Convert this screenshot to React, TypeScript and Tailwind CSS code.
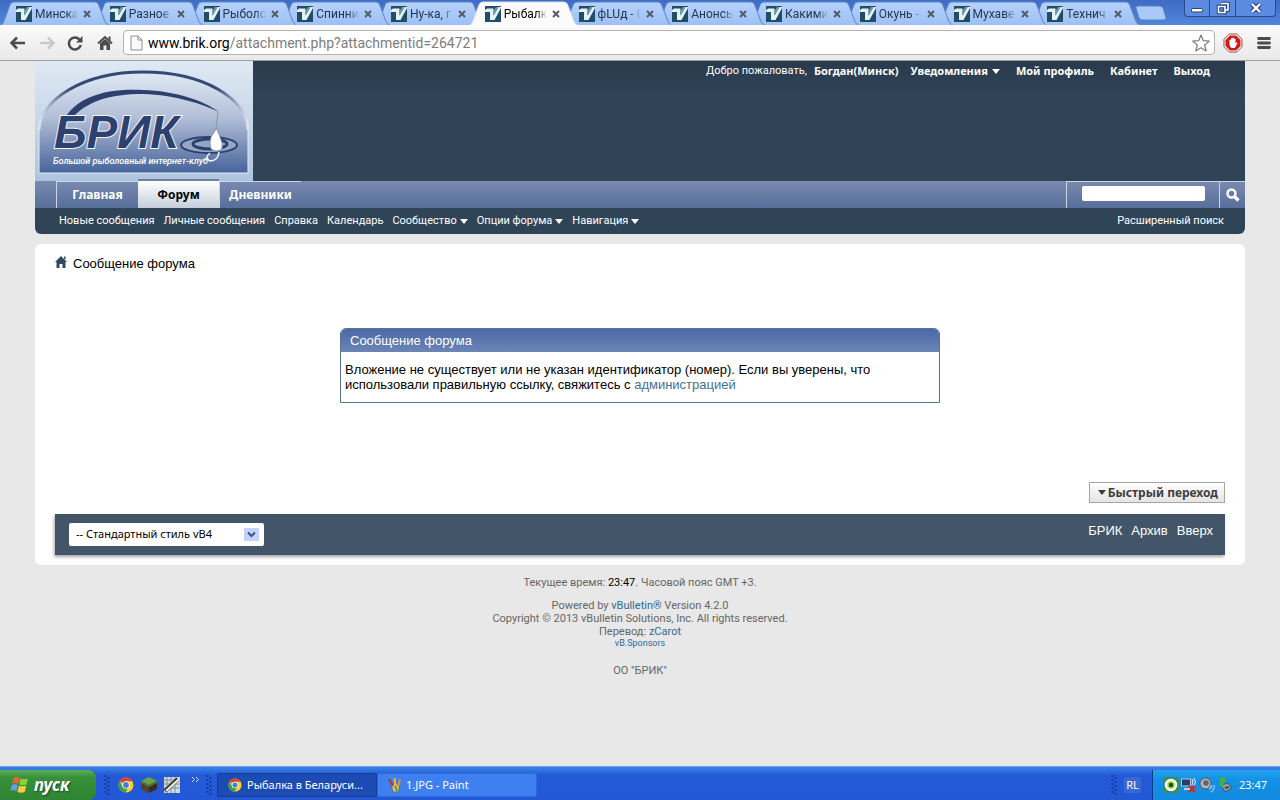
import React from 'react';

const tabs = [
  'Минска', 'Разное', 'Рыболо', 'Спинни', 'Ну-ка, г', 'Рыбалк', 'фLUд - С', 'Анонсы', 'Какими', 'Окунь -', 'Мухаве', 'Технич',
];

function VbIcon() {
  return (
    <svg viewBox="0 0 16 16" className="h-4 w-4 shrink-0" aria-hidden="true">
      <rect width="16" height="16" fill="#1f4e66" />
      <path d="M0 4 L2 2.500 H8.500 V9.500 L13.500 1 H16 V2 L9.500 14 H5 V6 H0 Z" fill="#e6f1f6" />
      <path d="M8.500 9.500 L13.500 1 H11 L8.500 5 Z" fill="#6d9bb0" />
    </svg>
  );
}

function ChromeIcon({ size }: { size: string }) {
  return (
    <svg viewBox="0 0 16 16" className={size} aria-hidden="true">
      <circle cx="8" cy="8" r="7.500" fill="#f7cf2e" />
      <path d="M8 8 L1.500 4.200 A7.500 7.500 0 0 1 14.500 4.300 L8 4.300 Z" fill="#dc4332" />
      <path d="M1.500 4.200 A7.500 7.500 0 0 0 7.200 15.450 L10.500 10.500 L8 8 L4.800 9.500 Z" fill="#3d9e48" />
      <circle cx="8" cy="8" r="3.800" fill="#fff" />
      <circle cx="8" cy="8" r="2.900" fill="#3f7fd4" />
    </svg>
  );
}

function Tab({ label, active, z }: { label: string; active: boolean; z: number }) {
  return (
    <div className="relative h-6 min-w-0 flex-1" style={{ zIndex: z }}>
      <svg viewBox="0 0 108 24" preserveAspectRatio="none" className="absolute inset-y-0 -left-[7px] h-full w-[calc(100%+14px)]" aria-hidden="true">
        <defs>
          <linearGradient id="tabFill" x1="0" y1="0" x2="0" y2="1">
            <stop offset="0" stopColor="#b5d2fb" />
            <stop offset="1" stopColor="#9dc0f5" />
          </linearGradient>
        </defs>
        <path
          d="M0 24 Q2 23 3 20 L9 4 Q10 1 13 1 H94 Q97 1 98 4 L104 20 Q105 23 108 24"
          fill={active ? '#fbfbfb' : 'url(#tabFill)'}
          stroke={active ? '#d6e2f4' : '#5f86bf'}
          strokeWidth="1"
        />
      </svg>
      <div className="relative flex h-full items-center pl-2 pt-[2px]">
        <VbIcon />
        <a href="#tab" className={`ml-[3px] w-[43px] shrink-0 overflow-hidden whitespace-nowrap text-xs [mask-image:linear-gradient(to_right,black_75%,transparent)] ${active ? 'text-black' : 'text-[#26364f]'}`}>
          {label}
        </a>
        <button aria-label="Закрыть вкладку" className="ml-[3px] h-3 w-3 shrink-0">
          <svg viewBox="0 0 12 12" className="h-3 w-3">
            <path d="M3 3 L9 9 M9 3 L3 9" stroke="#505a68" strokeWidth="1.900" />
          </svg>
        </button>
      </div>
    </div>
  );
}

function BrowserChrome() {
  return (
    <header className="border-b border-[#a0a0a0] bg-[#f0f0f0]">
      <div className="flex h-[25px] items-start bg-linear-to-b from-[#3e6bc4] to-[#5285dc] pl-2">
        <nav className="flex min-w-0 flex-1 self-end" aria-label="Вкладки">
          {tabs.map((t, i) => (
            <Tab key={t} label={t} active={i === 5} z={i === 5 ? 30 : 20 - i} />
          ))}
        </nav>
        <button aria-label="Новая вкладка" className="ml-[2px] mt-[5px] h-4 w-8">
          <svg viewBox="0 0 32 16" className="h-4 w-8">
            <path d="M1 3 Q0 1 3 1 H24 Q27 1 28 3 L31 13 Q31 15 29 15 H8 Q5 15 4 13 Z" fill="#a9c9f7" stroke="#5b83c6" />
          </svg>
        </button>
        <div className="ml-[17px] mr-1 flex h-[17px] w-[92px] overflow-hidden rounded-b-sm border border-t-0 border-[#2b4a8c] bg-[#5b8be0]">
          <button aria-label="Свернуть" className="flex w-[25px] justify-center border-r border-[#2b4a8c]">
            <svg viewBox="0 0 16 16" className="h-4 w-4"><rect x="2.500" y="8.500" width="11" height="3.500" rx="1" fill="#fff" stroke="#26406f" /></svg>
          </button>
          <button aria-label="Восстановить" className="flex w-[26px] justify-center border-r border-[#2b4a8c]">
            <svg viewBox="0 0 16 16" className="h-4 w-4">
              <path d="M6 3.500 H13 V10 H10.500 M3.500 6.500 H10 V12.500 H3.500 Z" fill="none" stroke="#26406f" strokeWidth="3.500" />
              <path d="M6 3.500 H13 V10 H10.500 M3.500 6.500 H10 V12.500 H3.500 Z" fill="none" stroke="#fff" strokeWidth="1.600" />
            </svg>
          </button>
          <button aria-label="Закрыть" className="flex flex-1 justify-center">
            <svg viewBox="0 0 16 16" className="h-4 w-4">
              <path d="M4 4 L12 12 M12 4 L4 12" stroke="#26406f" strokeWidth="4.500" />
              <path d="M4 4 L12 12 M12 4 L4 12" stroke="#fff" strokeWidth="2.400" />
            </svg>
          </button>
        </div>
      </div>
      <div className="flex h-[35px] items-center bg-linear-to-b from-[#fbfbfb] to-[#e9e9e9] pl-[9px] pr-2">
        <button aria-label="Назад" className="h-4 w-[18px]">
          <svg viewBox="0 0 18 16" className="h-4 w-[18px]"><path d="M8 2.500 L2.500 8 L8 13.500 M3 8 H16" fill="none" stroke="#4b4b4b" strokeWidth="2.500" /></svg>
        </button>
        <button aria-label="Вперёд" className="ml-[11px] h-4 w-[18px]">
          <svg viewBox="0 0 18 16" className="h-4 w-[18px]"><path d="M10 2.500 L15.500 8 L10 13.500 M15 8 H2" fill="none" stroke="#c9c9c9" strokeWidth="2.500" /></svg>
        </button>
        <button aria-label="Обновить" className="ml-[11px] h-4 w-4">
          <svg viewBox="0 0 16 16" className="h-4 w-4"><path d="M12.500 4.500 A6 6 0 1 0 13.800 10" fill="none" stroke="#4b4b4b" strokeWidth="2.500" /><path d="M15.500 1 V7.500 H9 Z" fill="#4b4b4b" /></svg>
        </button>
        <button aria-label="Домой" className="ml-[14px] h-4 w-4">
          <svg viewBox="0 0 16 16" className="h-4 w-4"><path d="M1 8.500 L8 2 L15 8.500" fill="none" stroke="#4b4b4b" strokeWidth="2" /><path d="M3 8.500 L8 4 L13 8.500 V15 H9.500 V10.500 H6.500 V15 H3 Z M11.500 1.500 H13.500 V6 L11.500 4 Z" fill="#4b4b4b" /></svg>
        </button>
        <div className="ml-[10px] flex h-[25px] flex-1 items-center rounded-sm border border-[#b4b4b4] bg-white pl-[6px] pr-1">
          <svg viewBox="0 0 13 16" className="h-4 w-[13px]" aria-hidden="true"><path d="M1 1 H8 L12 5 V15 H1 Z M8 1 V5 H12" fill="#fafafa" stroke="#8d8d8d" /></svg>
          <a href="#address" className="ml-[5px] flex-1 whitespace-nowrap text-sm text-[#7d7d7d]"><span className="text-black">www.brik.org</span>/attachment.php?attachmentid=264721</a>
          <button aria-label="В закладки" className="h-[18px] w-[18px]">
            <svg viewBox="0 0 18 18" className="h-[18px] w-[18px]"><path d="M9 1 L11.300 6.700 L17.300 7.100 L12.700 11 L14.200 17 L9 13.700 L3.800 17 L5.300 11 L0.700 7.100 L6.700 6.700 Z" fill="#fff" stroke="#7c7c7c" strokeWidth="1.200" strokeLinejoin="round" /></svg>
          </button>
        </div>
        <button aria-label="AdBlock" className="ml-2 h-5 w-5">
          <svg viewBox="0 0 20 20" className="h-5 w-5">
            <path d="M6.300 1 H13.700 L19 6.300 V13.700 L13.700 19 H6.300 L1 13.700 V6.300 Z" fill="#fff" stroke="#8f4a45" />
            <path d="M6.900 2.500 H13.100 L17.500 6.900 V13.100 L13.100 17.500 H6.900 L2.500 13.100 V6.900 Z" fill="#cf1a17" />
            <path d="M6.500 10 V7 Q7.200 6.200 8 7 V5.500 Q8.800 4.600 9.500 5.500 V5 Q10.200 4.200 11 5 V6 Q11.800 5.200 12.500 6 V10.500 L13.500 9.500 Q14.600 9.500 14.300 10.500 L11.800 15 H8.500 Q6.500 14 6.500 10 Z" fill="#fff" />
          </svg>
        </button>
        <button aria-label="Меню" className="ml-[13px] h-4 w-4">
          <svg viewBox="0 0 16 16" className="h-4 w-4"><path d="M2.500 3.500 H13.500 M2.500 8 H13.500 M2.500 12.500 H13.500" stroke="#4b4b4b" strokeWidth="2.800" strokeLinecap="round" /></svg>
        </button>
      </div>
    </header>
  );
}

function Logo() {
  return (
    <svg viewBox="0 0 218 120" className="h-[120px] w-[218px] shrink-0" role="img" aria-label="БРИК">
      <defs>
        <linearGradient id="logoBg" x1="0" y1="0" x2="0" y2="1"><stop offset="0" stopColor="#dfe9f4" /><stop offset="1" stopColor="#aec3de" /></linearGradient>
        <linearGradient id="logoArch" x1="0" y1="0" x2="0" y2="1"><stop offset="0" stopColor="#e0eaf5" /><stop offset="0.450" stopColor="#b3bfd8" /><stop offset="1" stopColor="#46639a" /></linearGradient>
        <linearGradient id="archLine" x1="0" y1="0" x2="1" y2="0"><stop offset="0" stopColor="#dce4ef" /><stop offset="0.150" stopColor="#344a75" /><stop offset="0.850" stopColor="#344a75" /><stop offset="1" stopColor="#dce4ef" /></linearGradient>
      </defs>
      <rect width="218" height="120" fill="url(#logoBg)" />
      <path d="M4 112 V69 C5 39 48 11 108 11 C168 11 213 37 213 69 V112 Z" fill="url(#logoArch)" stroke="#e4ecf5" />
      <path d="M4 69 C5 39 48 11 108 11 C168 11 212 37 213 69" fill="none" stroke="url(#archLine)" strokeWidth="3" />
      <path d="M28 60 C41 36 70 27 108 29 C140 30 168 39 184 51 C168 43 140 34 108 33 C75 33 50 40 35 60 Z" fill="#2d416f" />
      <path d="M183 51 L181 68" stroke="#8996ad" />
      <ellipse cx="174" cy="84" rx="28" ry="8" fill="#96a7c6" stroke="#2d416f" strokeWidth="2" />
      <ellipse cx="175" cy="83" rx="17" ry="5" fill="none" stroke="#2d416f" strokeWidth="3" />
      <text x="19" y="87" fontFamily="Liberation Sans, sans-serif" fontStyle="italic" fontWeight="700" fontSize="46" fill="#2d416f" stroke="#f4f7fb" strokeWidth="2" paintOrder="stroke">БРИК</text>
      <text x="18" y="103" fontFamily="Roboto, sans-serif" fontStyle="italic" fontWeight="500" fontSize="9" fill="#fff">Большой рыболовный интернет-клуб</text>
      <path d="M181 68 L176 76 Q174 82 176 88 Q181 92 187 88 Q188 82 185 76 L182 68 Z" fill="#fff" stroke="#63769a" strokeWidth="0.700" />
      <path d="M175 92 Q169 97 175 100 Q183 100 184 91" fill="none" stroke="#f4f7fb" strokeWidth="1.500" />
    </svg>
  );
}

function Arrow({ tone }: { tone: string }) {
  return <svg viewBox="0 0 8 5" className={`h-[5px] w-2 shrink-0 ${tone}`} aria-hidden="true"><path d="M0 0 H8 L4 5 Z" fill="currentColor" /></svg>;
}

function ForumHeader() {
  return (
    <div className="overflow-hidden rounded-b-md bg-[#304458] text-white">
      <div className="flex h-[120px] items-start justify-between bg-linear-to-b from-[#2a3a4c] to-[#304458] to-30%">
        <Logo />
        <nav className="flex pr-[35px] pt-1 font-['Noto_Sans',sans-serif] text-[11px] leading-3 font-bold" aria-label="Пользователь">
          <span className="font-['Roboto',sans-serif] font-normal">Добро пожаловать,</span>
          <a href="#user" className="ml-[7px]">Богдан(Минск)</a>
          <a href="#notices" className="ml-3 flex items-center gap-1">Уведомления <Arrow tone="text-white" /></a>
          <a href="#profile" className="ml-4">Мой профиль</a>
          <a href="#cabinet" className="ml-4">Кабинет</a>
          <a href="#logout" className="ml-4">Выход</a>
        </nav>
      </div>
      <div className="flex h-[27px] items-stretch bg-linear-to-b from-[#7a8aaf] to-[#566f9a]">
        <nav className="ml-[21px] flex font-['Noto_Sans',sans-serif] text-xs font-bold" aria-label="Разделы">
          <a href="#home" className="flex w-[82px] items-center justify-center border-l border-t border-[#c7d6ea]">Главная</a>
          <a href="#forum" className="-mt-[2px] flex w-[81px] items-center justify-center border-t-2 border-[#6d8299] bg-linear-to-b from-white to-[#c4cfdb] text-black">Форум</a>
          <a href="#blogs" className="flex w-[82px] items-center justify-center border-l border-t border-[#c7d6ea]">Дневники</a>
        </nav>
        <form className="ml-auto flex" onSubmit={(e) => e.preventDefault()}>
          <div className="flex w-[153px] items-start justify-center border-l border-t border-[#c7d6ea] pt-1">
            <input aria-label="Поиск" className="h-[15px] w-[123px] rounded-xs bg-white text-[11px] text-black" />
          </div>
          <button aria-label="Искать" className="flex w-[26px] items-center justify-center border-l border-t border-[#c7d6ea]">
            <svg viewBox="0 0 14 14" className="h-[14px] w-[14px]"><circle cx="5.500" cy="5.500" r="4" fill="none" stroke="#fff" strokeWidth="2.400" /><path d="M8.500 8.500 L12.500 12.500" stroke="#fff" strokeWidth="3.200" /></svg>
          </button>
        </form>
      </div>
      <div className="flex h-[26px] items-center justify-between pl-6 pr-[21px] text-[11px] whitespace-nowrap">
        <nav className="flex gap-[9px]" aria-label="Меню форума">
          <a href="#new">Новые сообщения</a>
          <a href="#pm">Личные сообщения</a>
          <a href="#faq">Справка</a>
          <a href="#calendar">Календарь</a>
          <a href="#community" className="flex items-center gap-[3px]">Сообщество <Arrow tone="text-white" /></a>
          <a href="#options" className="flex items-center gap-[3px]">Опции форума <Arrow tone="text-white" /></a>
          <a href="#navigation" className="flex items-center gap-[3px]">Навигация <Arrow tone="text-white" /></a>
        </nav>
        <a href="#search">Расширенный поиск</a>
      </div>
    </div>
  );
}

function ForumBody() {
  return (
    <main className="mt-[10px] rounded-md bg-white px-5 pb-[10px] pt-3 font-['Liberation_Sans',sans-serif]">
      <div className="flex items-center gap-[6px] text-[13px] leading-4 text-black">
        <svg viewBox="0 0 12 12" className="mb-1 h-3 w-3" aria-hidden="true"><path d="M6 0 L12 6 H10.500 V12 H7.500 V8 H4.500 V12 H1.500 V6 H0 Z M9 0.500 H10.500 V4 L9 2.500 Z" fill="#2f4a60" /></svg>
        <span>Сообщение форума</span>
      </div>
      <section className="mx-auto mt-14 max-w-[600px] overflow-hidden rounded-t-md border border-[#5a7493]">
        <h2 className="bg-linear-to-b from-[#4a69a8] to-[#6c85b5] px-[9px] py-1 text-[13px] leading-[15px] text-white">Сообщение форума</h2>
        <p className="px-1 pb-[10px] pt-[10px] text-[13px] leading-[15px] text-black">
          Вложение не существует или не указан идентификатор (номер). Если вы уверены, что использовали правильную ссылку, свяжитесь с <a href="#admin" className="text-[#417394]">администрацией</a>
        </p>
      </section>
      <div className="mt-[79px] flex justify-end">
        <button className="flex h-[21px] w-[136px] items-center justify-end gap-[2px] border border-[#a5a5a5] bg-linear-to-b from-white to-[#e4e4e4] pr-[6px] font-['Noto_Sans',sans-serif] text-xs font-bold whitespace-nowrap text-[#3e3e3e]">
          <Arrow tone="text-[#3e3e3e]" />Быстрый переход
        </button>
      </div>
      <footer className="mt-[11px] flex h-[41px] items-start justify-between bg-[#435669] px-3 shadow-[-1px_2px_3px_rgba(0,0,0,0.35)]">
        <div className="relative ml-[2px] mt-[9px] font-['Noto_Sans',sans-serif] text-[11px]">
          <select aria-label="Стиль" className="h-[23px] w-[195px] appearance-none rounded-xs bg-white px-[7px] text-black">
            <option>-- Стандартный стиль vB4</option>
          </select>
          <span className="pointer-events-none absolute right-[5px] top-[5px] flex h-[13px] w-[15px] items-center justify-center bg-[#c3d3fb]">
            <svg viewBox="0 0 9 7" className="h-[7px] w-[9px]"><path d="M1 1.500 L4.500 5 L8 1.500" fill="none" stroke="#41557f" strokeWidth="2" /></svg>
          </span>
        </div>
        <nav className="flex gap-[9px] pt-2 text-[13px] leading-[17px] text-white" aria-label="Ссылки">
          <a href="#brik">БРИК</a><a href="#archive">Архив</a><a href="#top">Вверх</a>
        </nav>
      </footer>
    </main>
  );
}

function Credits() {
  return (
    <div className="pt-[11px] text-center text-[11px] leading-[13px] text-[#666]">
      <p>Текущее время: <span className="text-black">23:47</span>. Часовой пояс GMT +3.</p>
      <p className="mt-[10px]">Powered by <a href="#vb" className="text-[#2d6a96]">vBulletin®</a> Version 4.2.0</p>
      <p>Copyright © 2013 vBulletin Solutions, Inc. All rights reserved.</p>
      <p>Перевод: <a href="#zcarot" className="text-[#2d6a96]">zCarot</a></p>
      <p className="text-[9px] leading-[11px]"><a href="#sponsors" className="text-[#2d6a96]">vB.Sponsors</a></p>
      <p className="mt-[15px]">ОО "БРИК"</p>
    </div>
  );
}

function Grip() {
  return (
    <svg viewBox="0 0 6 20" className="h-5 w-[6px] shrink-0" aria-hidden="true">
      <path d="M1.500 0 V20 M4.500 2 V20" stroke="#173a9c" strokeWidth="2" strokeDasharray="2 2" />
    </svg>
  );
}

function Taskbar() {
  return (
    <footer className="flex h-[34px] items-end border-t border-[#6f9fdc] bg-linear-to-b from-[#3a83e8] via-[#2459d8] via-25% to-[#2257d5] font-['Noto_Sans',sans-serif] text-[11px] text-white">
      <button className="flex h-[30px] w-24 items-center gap-1 rounded-r-lg bg-linear-to-b from-[#5cae58] via-[#37913a] via-25% to-[#2f8431] pl-[10px] text-[17px] font-bold italic [text-shadow:1px_1px_2px_#1b4a1b]">
        <svg viewBox="0 0 20 18" className="h-[18px] w-5" aria-hidden="true">
          <path d="M3.500 2 Q6.500 0 9.500 2 L8 8 Q5 6 2 8 Z" fill="#ea6534" />
          <path d="M10.500 2.500 Q14 4 18 2.500 L16.500 8.500 Q13 10 9.200 8.500 Z" fill="#8fce3d" />
          <path d="M1.800 9 Q5 7.200 7.800 9.200 L6.300 15 Q3.500 13.200 0.500 15 Z" fill="#6a9df2" />
          <path d="M8.900 9.700 Q12.500 11 16.200 9.700 L14.800 15.800 Q11 17.500 7.400 15.800 Z" fill="#f8cf3a" />
        </svg>
        пуск
      </button>
      <div className="flex h-[30px] items-center pl-2">
        <Grip />
        <span className="ml-2 flex items-center gap-[7px]">
          <ChromeIcon size="h-4 w-4" />
          <svg viewBox="0 0 16 16" className="h-4 w-4" aria-hidden="true"><path d="M8 0 L16 4 L8 8 L0 4 Z" fill="#6ea24a" /><path d="M0 4 L8 8 V16 L0 12 Z" fill="#56402c" /><path d="M16 4 L8 8 V16 L16 12 Z" fill="#3a2a20" /><path d="M0 4 L8 8 L16 4 V6 L8 10 L0 6 Z" fill="#4c7b34" /></svg>
          <svg viewBox="0 0 16 16" className="h-4 w-4" aria-hidden="true"><rect width="16" height="16" fill="#d3dadd" /><path d="M0 3 H16 M0 7 H16 M0 11 H16 M3 0 V16 M7 0 V16 M11 0 V16" stroke="#7a8f98" /><path d="M1 14 L14 2" stroke="#2c2c2c" strokeWidth="4" /><path d="M2 14 L15 2" stroke="#f1f1e6" strokeWidth="2" /></svg>
        </span>
        <button aria-label="Показать значки" className="mb-3 ml-[11px] h-3 w-[9px]"><svg viewBox="0 0 9 7" className="h-[7px] w-[9px]"><path d="M1 1 L3.500 3.500 L1 6 M5 1 L7.500 3.500 L5 6" fill="none" stroke="#cfe0fa" /></svg></button>
        <span className="ml-[6px]"><Grip /></span>
      </div>
      <button className="mb-[3px] ml-[5px] flex h-6 w-40 items-center gap-[5px] rounded-xs border border-[#173b93] bg-[#1c4bb4] pl-[10px] whitespace-nowrap"><ChromeIcon size="h-[14px] w-[14px]" />Рыбалка в Беларуси...</button>
      <button className="mb-[3px] flex h-6 w-40 items-center gap-1 rounded-xs border border-[#3468d6] bg-[#3e80f1] pl-[10px] whitespace-nowrap">
        <svg viewBox="0 0 14 16" className="h-4 w-[14px]" aria-hidden="true"><path d="M3 7 H12 L10.500 15 H5 Z" fill="#b9c8a2" stroke="#6b7152" /><path d="M5 9 L1 2" stroke="#c3322b" strokeWidth="2.200" /><path d="M7.500 10 L6.500 1" stroke="#e4c23b" strokeWidth="2" /><path d="M10 10 L12 2" stroke="#e78b2b" strokeWidth="2" /><path d="M7 9 L9 14" stroke="#3f8e3d" strokeWidth="1.500" /></svg>
        1.JPG - Paint
      </button>
      <div className="ml-auto flex h-[30px] items-center gap-[7px]"><Grip /><span className="rounded-xs bg-[#3768d6] px-[2px]">RL</span></div>
      <div className="ml-[11px] flex h-[30px] items-center gap-[2px] border-l border-[#0a3c8e] bg-linear-to-b from-[#25a4f0] via-[#1292e8] via-30% to-[#1189de] pl-[10px] pr-[13px]">
        <svg viewBox="0 0 16 16" className="h-4 w-4" aria-hidden="true"><rect width="16" height="16" rx="2" fill="#3c8c5c" /><circle cx="8" cy="8" r="5" fill="#9bd636" stroke="#fff" strokeWidth="2.500" /><circle cx="8" cy="8" r="2.200" fill="#1d4920" /></svg>
        <svg viewBox="0 0 16 16" className="h-4 w-4" aria-hidden="true"><rect x="0.500" y="2" width="9" height="7" fill="#2b3e6a" stroke="#b9c5dd" /><path d="M3 12 H9" stroke="#c6ccda" strokeWidth="2" /><path d="M11 2 Q13 5 11 8 M13 1 Q16 5 13 9" fill="none" stroke="#e6eefb" /><path d="M8 9 L14 15 M14 9 L8 15" stroke="#d6271d" strokeWidth="2.300" /></svg>
        <svg viewBox="0 0 16 16" className="h-4 w-4" aria-hidden="true"><circle cx="6.500" cy="6.500" r="5.500" fill="#b2b5b5" stroke="#4b545c" /><circle cx="7" cy="6" r="2.800" fill="#5e666b" /><path d="M10 12 Q13 11 12.500 8 M11.500 15 Q16 13 15 8" fill="none" stroke="#9cc8f2" strokeWidth="1.300" /></svg>
        <svg viewBox="0 0 16 16" className="h-4 w-4" aria-hidden="true"><path d="M4 8 L11 6 L15 11 L8 15 Z" fill="#8f9da3" stroke="#47555c" /><path d="M1 2 L8 0 L9 6 L7 5 L5 10 L2 8 L4 4 Z" fill="#44b52f" /><path d="M8 11 L12 10" stroke="#293a40" strokeWidth="1.500" /></svg>
        <span className="ml-1 whitespace-nowrap">23:47</span>
      </div>
    </footer>
  );
}

export default function App() {
  return (
    <div className="flex min-h-screen flex-col bg-[#e8e8e8] font-['Roboto','Noto_Sans',sans-serif]">
      <BrowserChrome />
      <div className="flex-1 px-[35px] pb-5">
        <ForumHeader />
        <ForumBody />
        <Credits />
      </div>
      <Taskbar />
    </div>
  );
}
